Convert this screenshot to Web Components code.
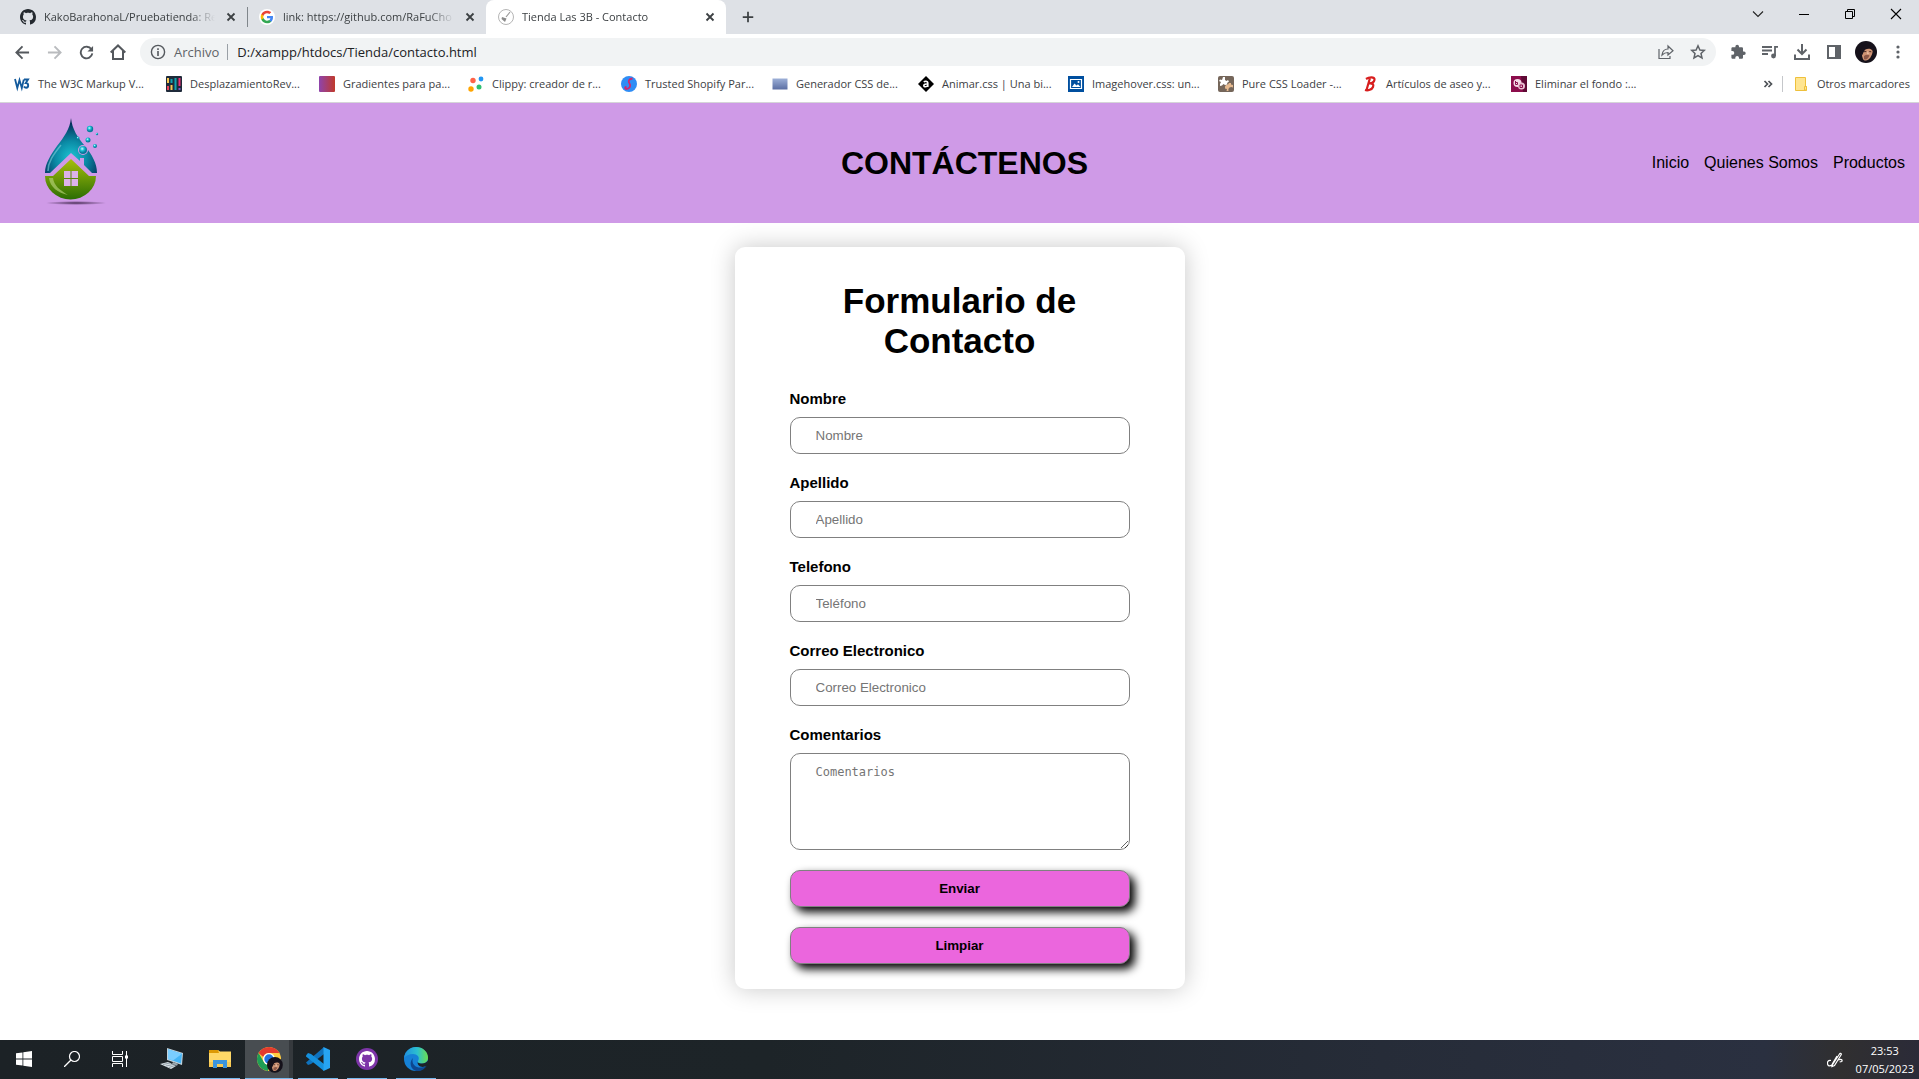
<!DOCTYPE html>
<html lang="es">
<head>
<meta charset="utf-8">
<title>Tienda Las 3B - Contacto</title>
<style>
  body { margin: 0; min-height: 100vh; display: flex; flex-direction: column; background: #fff; font-family: "Liberation Sans", Arial, sans-serif; }
  main { flex: 1; display: flex; flex-direction: column; }
  contact-form { margin: 24px auto; }
</style>
</head>
<body>
<browser-chrome></browser-chrome>
<main>
  <site-header heading="CONTÁCTENOS">
    <a href="#inicio">Inicio</a><a href="#quienes">Quienes Somos</a><a href="#productos">Productos</a>
  </site-header>
  <contact-form></contact-form>
</main>
<task-bar></task-bar>

<script>
const OCTOCAT = 'M8 0C3.58 0 0 3.58 0 8c0 3.54 2.29 6.53 5.47 7.59.4.07.55-.17.55-.38 0-.19-.01-.82-.01-1.49-2.01.37-2.53-.49-2.69-.94-.09-.23-.48-.94-.82-1.13-.28-.15-.68-.52-.01-.53.63-.01 1.08.58 1.23.82.72 1.21 1.87.87 2.33.66.07-.52.28-.87.51-1.07-1.78-.2-3.64-.89-3.64-3.95 0-.87.31-1.59.82-2.15-.08-.2-.36-1.02.08-2.12 0 0 .67-.21 2.2.82.64-.18 1.32-.27 2-.27s1.36.09 2 .27c1.53-1.04 2.2-.82 2.2-.82.44 1.1.16 1.92.08 2.12.51.56.82 1.27.82 2.15 0 3.07-1.87 3.75-3.65 3.95.29.25.54.73.54 1.48 0 1.07-.01 1.93-.01 2.2 0 .21.15.46.55.38A8.01 8.01 0 0 0 16 8c0-4.42-3.58-8-8-8z';
const PORTRAIT = '<circle cx="11" cy="11" r="11" fill="#15111a"/><path d="M8 8c2-3 8-3 9.500 0 .8 3-1 8-4 10.500-2 1.500-4.500 1.500-5.500-.5C6.500 15 6.500 11 8 8z" fill="#cf9474"/><path d="M5.500 12C5 7 8 4 12 4c4 0 6.500 2.500 6 6-2.500-3-5.500-2.500-8-1.200C9 10.500 8 12 7.500 14z" fill="#17111a"/><path d="M9 15c2-1.500 4-1.500 5.500-.5-1 3-3.500 5-5.500 3.500z" fill="#8d5848"/><path d="M12.500 9.500l1.500 3.500-2 .3z" fill="#ecc0a2"/><path d="M9 10.700l2.300-.2M14.300 10.500l2 .3" stroke="#3a211d" stroke-width=".9"/>';
const stroke = (c, w, d) => `<path d="${d}" fill="none" stroke="${c}" stroke-width="${w}"/>`;

/* name: [viewBox width, viewBox height, markup] */
const ICONS = {
  github: [16, 16, `<path fill="#24292f" d="${OCTOCAT}"/>`],
  google: [16, 16, '<circle cx="8" cy="8" r="8" fill="#fff"/><path d="M14 8.200c0-.5 0-.8-.1-1.200H8v2.300h3.400c-.2.9-.6 1.500-1.300 2v1.700h2C13.300 11.900 14 10.200 14 8.200z" fill="#4285f4"/><path d="M8 14.200c1.700 0 3.100-.5 4.100-1.500l-2-1.600c-.6.400-1.300.6-2.100.6-1.600 0-3-1.100-3.500-2.600H2.400v1.700C3.400 12.800 5.500 14.200 8 14.200z" fill="#34a853"/><path d="M4.500 9.200c-.3-.8-.3-1.600 0-2.400V5.100H2.400c-.9 1.800-.9 3.900 0 5.700z" fill="#fbbc05"/><path d="M8 4.200c.9 0 1.700.3 2.400.9l1.800-1.800C11.100 2.300 9.700 1.800 8 1.800c-2.500 0-4.600 1.400-5.600 3.400l2.100 1.600C5 5.300 6.400 4.200 8 4.200z" fill="#ea4335"/>'],
  broom: [16, 16, '<circle cx="8" cy="8" r="7.500" fill="#fff" stroke="#b5b5b5"/><path d="M12 3L8 8" stroke="#999" stroke-width="1.200"/><path d="M4 8l4.500 1.500L7 13 3.500 10z" fill="#8b8b8b"/>'],
  close: [16, 16, stroke('#3c4043', 1.8, 'M4.500 4.500l7 7M11.500 4.500l-7 7')],
  plus: [16, 16, stroke('#3c4043', 2, 'M8 2v12M2 8h12')],
  chevron: [16, 16, stroke('#222', 1.1, 'M3 5.500l5 5 5-5')],
  minimize: [16, 16, stroke('#000', 1, 'M3 8.500h10')],
  restore: [16, 16, stroke('#000', 1, 'M3.500 5.500h7v7h-7zM5.500 5.500v-2h7v7h-2')],
  exit: [16, 16, stroke('#000', 1.1, 'M3 3l10 10M13 3L3 13')],
  back: [16, 16, stroke('#54585d', 2, 'M15 8H2M8 1.500L1.500 8 8 14.500')],
  forward: [16, 16, stroke('#b9bbbe', 2, 'M1 8h13M8 1.500L14.500 8 8 14.500')],
  reload: [16, 16, stroke('#54585d', 2, 'M13.200 4.500A6.200 6.200 0 1 0 14.200 9') + '<path d="M15 1v6H9z" fill="#54585d"/>'],
  home: [16, 16, stroke('#54585d', 2, 'M.7 8.500L8 1.500l7.300 7M3 7v8h10V7')],
  info: [16, 16, '<circle cx="8" cy="8" r="6.600" fill="none" stroke="#54585d" stroke-width="1.400"/><path d="M7.200 7h1.600v5H7.200zM7.200 4.200h1.600v1.700H7.200z" fill="#54585d"/>'],
  share: [16, 16, stroke('#5f6368', 1.200, 'M1 5v9.500h11V12M4 11c.5-4 3-6 6-6V2l5 4.700-5 4.300V8.500C7.500 8.500 5.500 9.500 4 11z')],
  star: [16, 16, stroke('#5f6368', 1.500, 'M8 1.800l1.900 4.200 4.400.4-3.300 3 1 4.500L8 11.500l-4 2.400 1-4.500-3.300-3 4.400-.4z')],
  puzzle: [16, 16, '<path d="M14 7.500h-1V4.600c0-.8-.6-1.300-1.300-1.300H9V2.600a1.800 1.800 0 0 0-3.600 0v.7H2.700c-.7 0-1.300.5-1.300 1.300V7h1a1.900 1.900 0 0 1 0 3.800h-1v2.700c0 .8.6 1.300 1.300 1.300h2.600v-1a1.800 1.800 0 0 1 3.700 0v1h2.700c.7 0 1.300-.5 1.300-1.300v-2.600h1a1.700 1.700 0 0 0 0-3.400z" fill="#5f6368"/>'],
  music: [16, 16, stroke('#5f6368', 1.800, 'M0 3h10M0 6.500h10M0 10h6M13 12V2.900h3') + '<circle cx="11.500" cy="12" r="2.400" fill="#5f6368"/>'],
  download: [16, 16, stroke('#5f6368', 2, 'M8 0v9M3.500 5.500L8 10l4.500-4.500M1 10.500V15h14v-4.500')],
  panel: [16, 16, '<path d="M1 1h14v14H1zM3 3v10h6V3z" fill="#5f6368" fill-rule="evenodd"/>'],
  avatar: [22, 22, PORTRAIT],
  dots: [16, 16, '<g fill="#5f6368"><circle cx="8" cy="3" r="1.600"/><circle cx="8" cy="8" r="1.600"/><circle cx="8" cy="13" r="1.600"/></g>'],
  more: [16, 16, stroke('#4d5156', 1.700, 'M4.500 5l3 3-3 3M8.500 5l3 3-3 3')],
  folder: [16, 16, '<path d="M2.500 1.500h10v9h1v4h-11z" fill="#ffe591" stroke="#eec03c"/><path d="M11.500 14v-3.500h2V14z" fill="#ffe591" stroke="#eec03c"/>'],
  w3: [16, 16, stroke('#135a9c', 1.800, 'M1 3l2.300 9L5.500 4l2.300 8 2-8.500') + stroke('#135a9c', 1.900, 'M10 3.500h4L11.800 7c3 0 3.200 4.500.3 4.700-1 0-1.700-.5-2.200-1.200')],
  slides: [16, 16, '<rect width="16" height="16" rx="1" fill="#1f2a3a"/><path d="M2 2v5M5.500 9v5" stroke="#f9c851" stroke-width="2"/><path d="M2 10v4" stroke="#e9435a" stroke-width="2"/><path d="M5.500 3v4M9.500 2v12" stroke="#0fa3b1" stroke-width="2"/><path d="M13.500 2v8" stroke="#ef2f74" stroke-width="2"/><path d="M13.500 12v2" stroke="#7a5bd0" stroke-width="2"/>'],
  gradient: [16, 16, '<defs><linearGradient id="g"><stop stop-color="#8e44ad"/><stop offset="1" stop-color="#c0392b"/></linearGradient></defs><rect width="16" height="16" rx="1" fill="url(#g)"/>'],
  clippy: [16, 16, '<circle cx="5" cy="4.500" r="2.700" fill="#ff6347"/><circle cx="13" cy="3" r="2.400" fill="#2196f3"/><circle cx="3" cy="13" r="2.700" fill="#ffa500"/><circle cx="11" cy="11" r="2.500" fill="#2fbf71"/>'],
  shopify: [16, 16, '<circle cx="8" cy="8" r="8" fill="#2f8df5"/>' + stroke('#d4266e', 1.800, 'M11.500 2.500C7.500 3 7 5.500 8.500 7.500s.5 5.500-3.500 5.500c-1.500-.5-1-2 .5-2')],
  blueblock: [16, 16, '<defs><linearGradient id="b" x2="0" y2="1"><stop stop-color="#9db0d8"/><stop offset="1" stop-color="#5b6ea3"/></linearGradient></defs><rect x=".5" y="2.500" width="15" height="11" fill="url(#b)"/>'],
  diamond: [16, 16, '<path d="M8 0l8 8-8 8-8-8z" fill="#000"/>' + stroke('#fff', 1.600, 'M5.800 6c1-1 4-1 4 .8V11M9.800 8c-2-.2-4 .2-4 1.600 0 1.600 3 1.400 4-.3')],
  image: [16, 16, '<rect width="16" height="16" fill="#004f9f"/><path d="M2.500 3.500h11v9h-11z" fill="none" stroke="#fff" stroke-width="1.200"/><path d="M4 11l2.500-3.500 2 2 1.500-1.200L12.500 11z" fill="#fff"/><circle cx="10.500" cy="6" r="1" fill="#fff"/>'],
  loader: [16, 16, '<rect width="16" height="16" rx="2" fill="#75665a"/><path d="M5 1h2v3l1.500 1L10 4l1 1.500L9 7l.5 1.500L7 9 5.500 8 4 9.500 2 10V8l1-2-2-1 1-1.500 2 .5z" fill="#fff"/><path d="M8 9l2-.5L11 7h2v1.500l2 .5v2.500a3 3 0 0 0-4.500 3.500L8.500 15 9 13l-2-.5V10.500z" fill="#e5b98f"/>'],
  script: [16, 16, stroke('#d81e1e', 2.200, 'M8 2L4.500 14M4 3c3-2 9-2.500 8.500.8C12 6.500 9 7.500 7 7.500c4-.5 5 1 4 3.500s-5 4-8 3')],
  eraser: [16, 16, '<rect width="16" height="16" fill="#8c0d4c"/><path d="M10 0h6v16h-4z" fill="#5f0a35"/><circle cx="6.500" cy="7" r="4" fill="#f3d9e5"/><circle cx="10.500" cy="10" r="3.500" fill="#e9bfd1"/>' + stroke('#8c0d4c', 1, 'M4.500 5v3.500h2v-2h-2M9 9h2.500v2.500H9z')],
  windows: [16, 16, '<path d="M0 2.300L6.500 1.400v6.200H0zM7.300 1.300L16 0v7.600H7.300zM0 8.400h6.500v6.200L0 13.700zM7.300 8.400H16V16l-8.700-1.300z" fill="#fff"/>'],
  search: [16, 16, '<circle cx="10.500" cy="5.500" r="5" fill="none" stroke="#fff" stroke-width="1.200"/>' + stroke('#fff', 1.300, 'M7 9L0 16')],
  taskview: [16, 16, stroke('#fff', 1, 'M.5 0v3.500h10V0M.5 16v-3.500h10V16M.5 5.500h10v5H.5zM14.500 0v16') + '<path d="M13 4.500h3v3h-3z" fill="#fff"/>'],
  pc: [24, 24, '<path d="M8 1l16 5-1 12-15-5z" fill="#c4d2da"/><path d="M9 2.200l14 4.600-1 9.700-13-4.500z" fill="#45b4f5"/><path d="M9 2.200l14 4.600-9 6.700-5-1.500z" fill="#7acdff"/><path d="M14 15l5 1.700-1 2-5-1.700z" fill="#9aa6ad"/><path d="M1 17l8-2 8 4-5 3z" fill="#d9e1e6"/><path d="M4 17.500l7-1.500M7 19l7-1.500M10 20.500l6-2" stroke="#7f8d96" stroke-width=".8"/>'],
  explorer: [24, 24, '<path d="M1 3h9l2 1.500h11V20H1z" fill="#ffd867"/><path d="M1 3h9l1 3H1z" fill="#dd9a05"/><path d="M1 15h22v5H1z" fill="#f9ca53"/><path d="M5 21v-8h14v8h-4v-4H9v4z" fill="#3c95dc"/>'],
  chrome: [28, 28, '<circle cx="14" cy="14" r="12" fill="#ffcd40"/><path d="M14 2a12 12 0 0 1 10.400 6H14a6 6 0 0 0-5.700 4L3.600 8A12 12 0 0 1 14 2z" fill="#e33b2e"/><path d="M3.600 8l5.200 9a6 6 0 0 0 5.200 3l-1 6A12 12 0 0 1 3.600 8z" fill="#1f9d55"/><circle cx="14" cy="14" r="6" fill="#fff"/><circle cx="14" cy="14" r="4.700" fill="#2374e1"/><g transform="translate(12 12) scale(.72)">' + PORTRAIT + '</g>'],
  vscode: [24, 24, '<path d="M18 0L0 15.500 2 18l3-1L18 7z" fill="#0f72bd"/><path d="M0 8.500L2 6l3 1 13 10v7L0 9.500z" fill="#1590dd"/><path d="M17.500 0L24 3v18l-6.500 3z" fill="#27a4f2"/>'],
  desktop: [24, 24, '<circle cx="12" cy="12" r="11" fill="#7d35a8"/><g transform="translate(4 4)"><path fill="#fff" d="' + OCTOCAT + '"/></g>'],
  edge: [24, 24, '<defs><linearGradient id="e"><stop stop-color="#1f8fe0"/><stop offset=".55" stop-color="#2cc0cf"/><stop offset="1" stop-color="#6bdd4e"/></linearGradient></defs><circle cx="12" cy="12" r="12" fill="#1681d6"/><path d="M0 11C1 4 6 0 12 0c7 0 12 5 12 10.500 0 4-3 6-6 6-3.500 0-5-1.500-4-2.500 2.500-4-1-7-5-7-4 0-7.500 2-9 4z" fill="url(#e)"/><path d="M9 11c-2 5 2 10 8 9.500 3 0 5-1 6-2C20 23 16 24.500 12 24c-6-2-7-9-3-13z" fill="#0d478f"/><path d="M14 14c-1 1 .5 2.500 4 2.500 2.500 0 4.500-1 6-3 0 2-.3 3.500-1 5-4 3-11 1-9-4.500z" fill="#1d2327"/>'],
  pen: [16, 16, stroke('#fff', 1.200, 'M4 8.500C1 8 0 10 .7 12.500c.6 2 3 2 5.300-.5L12.500 2c1-1.500 2.300-.3 1.500 1L7.500 13.500 5 14.500l.5-2.800L10 4M11 8c3-1.500 5 0 3.700 1.500l-2 .3')]
};

/* Each element clones its template into an open shadow root, filling {{attribute}} marks. */
function define(name, css, html, setup) {
  customElements.define(name, class extends HTMLElement {
    constructor() { super(); this.attachShadow({ mode: 'open' }); }
    connectedCallback() {
      if (this.shadowRoot.childNodes.length) return;
      const t = document.createElement('template');
      t.innerHTML = `<style>*{box-sizing:border-box}${css}</style>` +
        html.replace(/{{(\w+)}}/g, (_, k) => this.getAttribute(k) || '');
      this.shadowRoot.append(t.content.cloneNode(true));
      if (setup) setup.call(this, this.shadowRoot);
    }
  });
}

define('ui-icon', ':host{display:block;flex:none}svg{display:block}', '<span id="i"></span>', function (root) {
  const [w, h, body] = ICONS[this.getAttribute('name')];
  const s = this.getAttribute('size') || w;
  root.getElementById('i').innerHTML = `<svg width="${s}" height="${s}" viewBox="0 0 ${w} ${h}" aria-hidden="true">${body}</svg>`;
});

define('icon-button', `
  :host{display:flex;flex:none;width:32px;height:28px}
  button{flex:1;display:flex;align-items:center;justify-content:center;border:0;padding:0;background:none}`,
  '<button type="button" aria-label="{{label}}"><ui-icon name="{{icon}}" size="{{size}}"></ui-icon></button>');

define('browser-tab', `
  :host{display:flex;align-items:center;width:239px;height:34px;padding:0 8px 0 12px;gap:8px;font-size:11px;line-height:16px;color:#3c4043;position:relative}
  :host([active]){background:#fff;border-radius:8px 8px 0 0;width:240px}
  :host([divided])::after{content:"";position:absolute;right:-1px;top:7px;width:1px;height:20px;background:#80868b}
  span{flex:1;min-width:0;overflow:hidden;white-space:nowrap;-webkit-mask-image:linear-gradient(90deg,#000 85%,transparent)}
  icon-button{width:16px;height:16px}`,
  '<ui-icon name="{{icon}}"></ui-icon><span><slot></slot></span><icon-button icon="close" size="16" label="Cerrar pestaña"></icon-button>');

define('bookmark-item', `
  :host{display:block;min-width:0}
  a{display:flex;align-items:center;gap:8px;color:#3c4043;text-decoration:none;font-size:11px;line-height:16px;white-space:nowrap}`,
  '<a href="#"><ui-icon name="{{icon}}"></ui-icon><span><slot></slot></span></a>');

define('browser-chrome', `
  :host{display:block;font-family:"Open Sans","Noto Sans",sans-serif;background:#fff;border-bottom:1px solid #d5d5d8}
  .tabs{display:flex;height:34px;padding-left:8px;background:#dee1e6}
  .tabs>icon-button{width:44px;height:34px}
  .window{margin-left:auto;display:flex}
  .window icon-button{width:46px}
  .bar{display:flex;align-items:center;height:36px;padding:0 5px 0 6px}
  .address{flex:1;display:flex;align-items:center;height:28px;margin:0 6px;padding:0 2px 0 10px;border-radius:14px;background:#f1f3f4;font-size:13px;line-height:18px}
  .address label{padding:0 8px;color:#5f6368}
  .address input{flex:1;min-width:0;border:0;border-left:1px solid #9aa0a6;height:16px;padding:0 0 0 9px;background:none;color:#202124;font:inherit}
  .marks{display:flex;align-items:center;height:32px;padding:0 9px 4px 14px}
  .list{display:grid;grid-template-columns:152px 153px 149px 153px 151px 146px 150px 150px 144px 149px 150px}
  .marks>icon-button{margin-left:auto;width:16px}
  .rest{border-left:1px solid #c5c7ca;margin-left:6px;padding-left:10px}`,
  `<div class="tabs">
    <browser-tab icon="github" divided>KakoBarahonaL/Pruebatienda: Re</browser-tab>
    <browser-tab icon="google">link: https://github.com/RaFuCho</browser-tab>
    <browser-tab icon="broom" active>Tienda Las 3B - Contacto</browser-tab>
    <icon-button icon="plus" size="14" label="Nueva pestaña"></icon-button>
    <div class="window">
      <icon-button icon="chevron" label="Buscar pestañas"></icon-button>
      <icon-button icon="minimize" label="Minimizar"></icon-button>
      <icon-button icon="restore" label="Restaurar"></icon-button>
      <icon-button icon="exit" label="Cerrar"></icon-button>
    </div>
  </div>
  <div class="bar">
    <icon-button icon="back" size="15" label="Atrás"></icon-button>
    <icon-button icon="forward" size="15" label="Adelante"></icon-button>
    <icon-button icon="reload" size="15" label="Recargar"></icon-button>
    <icon-button icon="home" label="Inicio"></icon-button>
    <div class="address">
      <ui-icon name="info"></ui-icon>
      <label for="url">Archivo</label>
      <input id="url" type="text" value="D:/xampp/htdocs/Tienda/contacto.html">
      <icon-button icon="share" label="Compartir"></icon-button>
      <icon-button icon="star" label="Añadir a marcadores"></icon-button>
    </div>
    <icon-button icon="puzzle" label="Extensiones"></icon-button>
    <icon-button icon="music" label="Multimedia"></icon-button>
    <icon-button icon="download" label="Descargas"></icon-button>
    <icon-button icon="panel" label="Panel lateral"></icon-button>
    <icon-button icon="avatar" label="Perfil"></icon-button>
    <icon-button icon="dots" label="Menú"></icon-button>
  </div>
  <div class="marks">
    <div class="list">
      <bookmark-item icon="w3">The W3C Markup V...</bookmark-item>
      <bookmark-item icon="slides">DesplazamientoRev...</bookmark-item>
      <bookmark-item icon="gradient">Gradientes para pa...</bookmark-item>
      <bookmark-item icon="clippy">Clippy: creador de r...</bookmark-item>
      <bookmark-item icon="shopify">Trusted Shopify Par...</bookmark-item>
      <bookmark-item icon="blueblock">Generador CSS de...</bookmark-item>
      <bookmark-item icon="diamond">Animar.css | Una bi...</bookmark-item>
      <bookmark-item icon="image">Imagehover.css: un...</bookmark-item>
      <bookmark-item icon="loader">Pure CSS Loader -...</bookmark-item>
      <bookmark-item icon="script">Artículos de aseo y...</bookmark-item>
      <bookmark-item icon="eraser">Eliminar el fondo :...</bookmark-item>
    </div>
    <icon-button icon="more" label="Más marcadores"></icon-button>
    <bookmark-item class="rest" icon="folder">Otros marcadores</bookmark-item>
  </div>`);

define('site-logo', ':host{display:block}svg{display:block}', `
  <svg width="64" height="92" viewBox="0 0 64 92" role="img" aria-label="Tienda Las 3B">
    <defs>
      <radialGradient id="drop" cx=".5" cy=".72" r=".75"><stop stop-color="#1bc4d2"/><stop offset=".4" stop-color="#0b8aa5"/><stop offset=".9" stop-color="#03214f"/></radialGradient>
      <linearGradient id="leaf" x2="0" y2="1"><stop stop-color="#a7bf0a"/><stop offset="1" stop-color="#2b6d04"/></linearGradient>
      <radialGradient id="bub" cx=".4" cy=".35"><stop stop-color="#c9fbff"/><stop offset=".5" stop-color="#1bbfd3"/><stop offset="1" stop-color="#087a9b"/></radialGradient>
      <radialGradient id="sh"><stop stop-color="#4b3158"/><stop offset="1" stop-color="#4b3158" stop-opacity="0"/></radialGradient>
    </defs>
    <path d="M27 1c1 11 7 20 14 28 7 9 12 17 12 27h-5L40 48v-7h-4v3l-9-8L6 56H1c0-10 6-18 12-27C20 20 26 12 27 1z" fill="url(#drop)"/>
    <path d="M4 54c0-9 5-16 13-26" fill="none" stroke="#7fd0dd" stroke-width="1.500" opacity=".6"/>
    <path d="M27 42l18 17h7a25 23 0 0 1-51 0h8z" fill="url(#leaf)"/>
    <path d="M5 61c1 9 9 15 19 17-8-5-14-9-15-17z" fill="#b7d27a" opacity=".65"/>
    <path d="M20 54h14v15H20z" fill="#dcb2ea"/><path d="M27 54v15M20 61.500h14" stroke="#5b8a0b"/>
    <circle cx="39" cy="33" r="5" fill="#d09ae7"/><circle cx="39" cy="33" r="4" fill="url(#bub)"/>
    <circle cx="46" cy="12" r="3.200" fill="url(#bub)"/><circle cx="44" cy="23" r="2.500" fill="url(#bub)"/><circle cx="51" cy="29" r="2" fill="url(#bub)"/><circle cx="53" cy="17" r="1.200" fill="url(#bub)"/><circle cx="34" cy="21" r="1.500" fill="url(#bub)"/>
    <ellipse cx="32" cy="86" rx="31" ry="2" fill="url(#sh)"/>
  </svg>`);

define('site-header', `
  :host{display:grid;grid-template-columns:1fr auto 1fr;align-items:center;height:120px;padding:0 14px 0 24px;background:#cf9ae7}
  site-logo{padding-left:20px}
  h1{margin:0;font-size:32px;line-height:36px;color:#000}
  nav{display:flex;justify-content:flex-end;gap:15px;font-size:16px;line-height:18px}
  ::slotted(a){color:#000;text-decoration:none}`,
  '<site-logo></site-logo><h1>{{heading}}</h1><nav><slot></slot></nav>');

const FIELD = 'width:100%;border:1px solid #808080;border-radius:10px;background:#fff;';
define('form-field', `
  :host{display:flex;flex-direction:column;gap:10px}
  label{font-size:15px;line-height:17px;font-weight:bold;color:#000}
  input,textarea{display:block;${FIELD}padding:10px 25px;font-family:"Liberation Sans",Arial,sans-serif}
  input{height:37px}
  textarea{height:97px;font-family:"DejaVu Sans Mono",monospace;font-size:12px;line-height:16px}
  ::placeholder{color:#757575}`,
  '<label for="f">{{label}}</label><input id="f" type="{{type}}" placeholder="{{hint}}">',
  function (root) {
    if (!this.hasAttribute('multiline')) return;
    const area = document.createElement('textarea');
    area.id = 'f'; area.placeholder = this.getAttribute('hint');
    root.querySelector('input').replaceWith(area);
  });

define('contact-form', `
  :host{display:block;width:450px;max-width:100%;padding:34px 55px 25px;box-sizing:border-box;border-radius:10px;background:#fff;box-shadow:0 0 25px rgba(0,0,0,.22)}
  h2{margin:0 0 29px;font-size:35px;line-height:40px;text-align:center;color:#000}
  form{display:flex;flex-direction:column;gap:20px}
  button{${FIELD}height:37px;background:#eb66dd;color:#000;font-family:inherit;font-weight:bold;box-shadow:5px 5px 10px #000}`,
  `<h2>Formulario de Contacto</h2>
  <form>
    <form-field label="Nombre" hint="Nombre" type="text"></form-field>
    <form-field label="Apellido" hint="Apellido" type="text"></form-field>
    <form-field label="Telefono" hint="Teléfono" type="tel"></form-field>
    <form-field label="Correo Electronico" hint="Correo Electronico" type="email"></form-field>
    <form-field label="Comentarios" hint="Comentarios" multiline></form-field>
    <button type="submit">Enviar</button>
    <button type="reset">Limpiar</button>
  </form>`);

define('task-item', `
  :host{display:flex;justify-content:center;width:49px;height:39px}
  :host([system]){width:48px}
  button{width:40px;display:flex;align-items:center;justify-content:center;border:0;border-bottom:1px solid transparent;padding:0;background:none}
  :host([running]) button{border-bottom-color:#76b9ed}
  :host([current]) button{width:48px;background:#484d51;box-shadow:inset -4px 0 #35393d}`,
  '<button type="button" aria-label="{{label}}"><ui-icon name="{{icon}}" size="{{size}}"></ui-icon></button>');

define('task-bar', `
  :host{display:flex;height:39px;color:#fff;font-family:"Open Sans","Noto Sans",sans-serif;background:linear-gradient(90deg,#1c2226 0,#1d2428 40%,#262c38 72%,#2a3040 92%,#302f30 96%,#2b2b38 100%)}
  .apps{display:flex;margin-left:2px}
  .tray{display:flex;align-items:center;gap:13px;margin-left:auto;padding-right:5px}
  time{display:flex;flex-direction:column;align-items:center;font-size:11px;line-height:18px}`,
  `<task-item system icon="windows" label="Inicio"></task-item>
  <task-item system icon="search" label="Buscar"></task-item>
  <task-item system icon="taskview" label="Vista de tareas"></task-item>
  <div class="apps">
    <task-item icon="pc" label="Este equipo"></task-item>
    <task-item running icon="explorer" label="Explorador"></task-item>
    <task-item running current icon="chrome" label="Chrome"></task-item>
    <task-item running icon="vscode" label="Visual Studio Code"></task-item>
    <task-item running icon="desktop" label="GitHub Desktop"></task-item>
    <task-item running icon="edge" label="Edge"></task-item>
  </div>
  <div class="tray"><ui-icon name="pen"></ui-icon><time datetime="2023-05-07T23:53"><span>23:53</span><span>07/05/2023</span></time></div>`);
</script>
</body>
</html>
